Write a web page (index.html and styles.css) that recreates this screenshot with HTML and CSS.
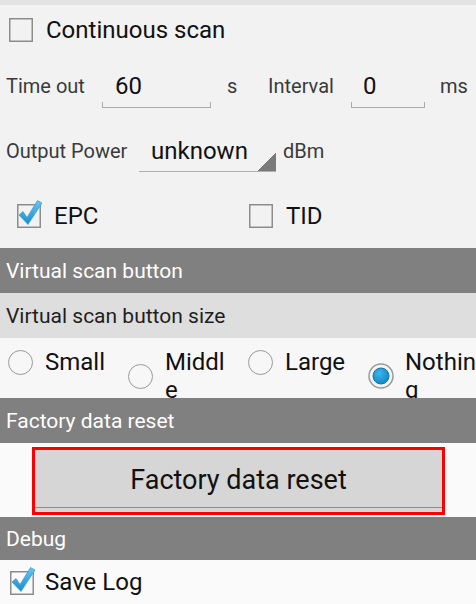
FILE: index.html
```html
<!DOCTYPE html>
<html>
	<head>
		<meta charset="utf-8">
		<title>Settings</title>
		<link rel="stylesheet" href="styles.css">
	</head>
	<body>
		<div class="topbar"></div>

		<div class="row row-scan">
			<label class="check">
				<svg class="box" width="26" height="26" viewBox="0 0 26 26"><rect x="1.75" y="1.75" width="22.5" height="22.5" fill="none" stroke="#8c8c8c" stroke-width="1.5"/></svg>
				<span>Continuous scan</span>
			</label>
		</div>

		<div class="row row-time">
			<span class="lbl lbl-time">Time out</span>
			<span class="field field-time">60</span>
			<span class="unit unit-s">s</span>
			<span class="lbl lbl-interval">Interval</span>
			<span class="field field-interval">0</span>
			<span class="unit unit-ms">ms</span>
		</div>

		<div class="row row-power">
			<span class="lbl lbl-power">Output Power</span>
			<span class="spinner">unknown</span>
			<span class="unit unit-dbm">dBm</span>
		</div>

		<div class="row row-tags">
			<label class="check tag">
				<svg class="box box-on" width="30" height="30" viewBox="0 0 30 30">
					<defs>
						<linearGradient id="tick" x1="0" y1="0" x2="0" y2="1">
							<stop offset="0" stop-color="#6cc4ef"/>
							<stop offset="1" stop-color="#1b8cc8"/>
						</linearGradient>
					</defs>
					<rect x="1.75" y="5.75" width="22.5" height="22.5" fill="none" stroke="#8c8c8c" stroke-width="1.5"/>
					<path d="M3 16 L7 12.5 L11 18.5 L21.5 1.5 L26 4 L12 25.5 Z" fill="url(#tick)" stroke="#3aa6e0" stroke-width="0.8" stroke-linejoin="round"/>
				</svg>
				<span>EPC</span>
			</label>
			<label class="check tag">
				<svg class="box" width="26" height="26" viewBox="0 0 26 26"><rect x="1.75" y="1.75" width="22.5" height="22.5" fill="none" stroke="#8c8c8c" stroke-width="1.5"/></svg>
				<span>TID</span>
			</label>
		</div>

		<div class="head">Virtual scan button</div>
		<div class="subhead">Virtual scan button size</div>

		<div class="options">
			<label class="opt">
				<span class="radio"></span>
				<span class="opt-text">Small</span>
			</label>
			<label class="opt">
				<span class="radio"></span>
				<span class="opt-text">Middle</span>
			</label>
			<label class="opt">
				<span class="radio"></span>
				<span class="opt-text">Large</span>
			</label>
			<label class="opt">
				<svg class="radio-on" width="26" height="26" viewBox="0 0 26 26">
					<defs>
						<radialGradient id="dot" cx="0.4" cy="0.35" r="0.7">
							<stop offset="0" stop-color="#3db4ee"/>
							<stop offset="1" stop-color="#0f86c4"/>
						</radialGradient>
					</defs>
					<circle cx="13" cy="13" r="12" fill="#f4f4f4" stroke="#9a9a9a" stroke-width="1.5"/>
					<circle cx="13" cy="13" r="8" fill="url(#dot)" stroke="#1479ad" stroke-width="1"/>
				</svg>
				<span class="opt-text">Nothing</span>
			</label>
		</div>

		<div class="head">Factory data reset</div>
		<div class="reset-area">
			<button class="reset-btn">Factory data reset</button>
		</div>

		<div class="head head-debug">Debug</div>
		<div class="row row-log">
			<label class="check">
				<svg class="box box-on" width="30" height="30" viewBox="0 0 30 30">
					<rect x="1.75" y="5.75" width="22.5" height="22.5" fill="none" stroke="#8c8c8c" stroke-width="1.5"/>
					<path d="M3 16 L7 12.5 L11 18.5 L21.5 1.5 L26 4 L12 25.5 Z" fill="url(#tick)" stroke="#3aa6e0" stroke-width="0.8" stroke-linejoin="round"/>
				</svg>
				<span>Save Log</span>
			</label>
		</div>
	</body>
</html>
```

FILE: styles.css
```css
* {
  padding: 0;
  margin: 0;
  box-sizing: border-box;
}

body {
  width: 476px;
  height: 604px;
  overflow: hidden;
  background: #f2f2f2;
  font-family: Roboto, "Liberation Sans", sans-serif;
  color: #111;
}

.topbar {
  height: 5px;
  background: #e3e3e3;
}

.row {
  display: flex;
  align-items: center;
}

/* checkbox rows */
.check {
  display: flex;
  align-items: center;
  font-size: 24px;
}

.check .box {
  display: block;
  margin-right: 12px;
}

.check .box-on {
  margin-top: -4px;
  margin-right: 8px;
}

.row-scan {
  height: 50px;
  padding-left: 8px;
}

/* time out / interval */
.row-time {
  height: 62px;
  padding-left: 6px;
}

.lbl,
.unit {
  font-size: 20px;
  color: #3a3a3a;
}

.lbl-time {
  width: 96px;
}

.lbl-interval {
  width: 83px;
}

.field {
  height: 42px;
  line-height: 40px;
  padding-left: 13px;
  font-size: 24px;
  color: #111;
  border-bottom: 1px solid #ababab;
  background:
    linear-gradient(#ababab, #ababab) left bottom / 1px 5px no-repeat,
    linear-gradient(#ababab, #ababab) right bottom / 1px 5px no-repeat;
}

.field-time {
  width: 109px;
  margin-top: 2px;
}

.field-interval {
  width: 74px;
  padding-left: 12px;
  margin-top: 2px;
}

.unit-s {
  width: 41px;
  margin-left: 16px;
}

.unit-ms {
  margin-left: 15px;
}

/* output power */
.row-power {
  height: 68px;
  padding-left: 6px;
}

.lbl-power {
  width: 133px;
}

.spinner {
  width: 137px;
  height: 40px;
  line-height: 38px;
  padding-left: 12px;
  margin-top: 2px;
  font-size: 24px;
  color: #111;
  border-bottom: 1px solid #b0b0b0;
  background: linear-gradient(to bottom right, transparent 50%, #7a7a7a 50%) right bottom / 18px 19px no-repeat;
}

.unit-dbm {
  margin-left: 7px;
}

/* EPC / TID */
.row-tags {
  height: 63px;
  padding-bottom: 2px;
}

.tag {
  width: 232px;
  padding-left: 16px;
}

/* section headers */
.head {
  height: 45px;
  line-height: 46px;
  padding-left: 6px;
  background: #808080;
  color: #fff;
  font-size: 21px;
}

.head-debug {
  height: 43px;
  line-height: 44px;
}

.subhead {
  height: 45px;
  line-height: 46px;
  padding-left: 6px;
  background: #dedede;
  color: #1e1e1e;
  font-size: 21px;
}

/* radio group */
.options {
  display: grid;
  grid-template-columns: 120px 120px 120px 120px;
  height: 60px;
  overflow: hidden;
  background: #f7f7f7;
}

.opt {
  display: flex;
  align-items: center;
  align-self: start;
  padding: 10px 10px 0 8px;
  font-size: 24px;
}

.opt:last-child {
  padding-right: 0;
}

.radio {
  flex: none;
  width: 25px;
  height: 25px;
  border: 1.5px solid #9a9a9a;
  border-radius: 50%;
  margin-right: 12px;
}

.radio-on {
  flex: none;
  display: block;
  margin-right: 11px;
}

.opt-text {
  flex: 1;
  line-height: 28px;
  word-break: break-all;
}

/* factory reset */
.reset-area {
  height: 74px;
  padding: 4px 31px 0 32px;
  background: #fafafa;
}

.reset-btn {
  display: block;
  width: 100%;
  height: 68px;
  border: 3px solid #ff0000;
  background: #d6d6d6;
  box-shadow: inset 0 -4px 0 #d6d6d6, inset 0 -5px 0 #8c8c8c;
  font-family: Roboto, "Liberation Sans", sans-serif;
  font-size: 27px;
  color: #111;
  padding-bottom: 3px;
}

/* save log */
.row-log {
  height: 44px;
  padding-left: 9px;
  background: #fafafa;
}

.row-log .box-on {
  margin-top: -2px;
  margin-right: 6px;
}
```
